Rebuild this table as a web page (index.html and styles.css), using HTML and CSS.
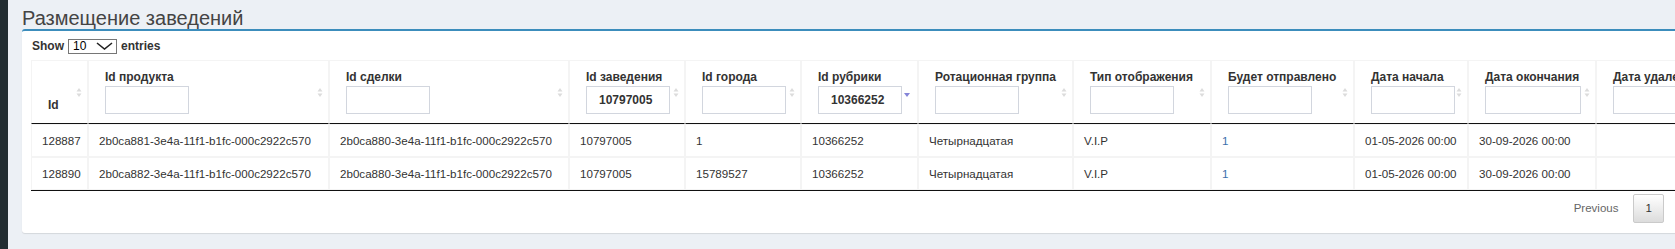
FILE: index.html
```html
<!DOCTYPE html>
<html lang="ru">
<head>
<meta charset="utf-8">
<title>Размещение заведений</title>
<link rel="stylesheet" href="styles.css">
</head>
<body>
<div class="layout">
  <aside class="sidebar"></aside>
  <main class="content">
    <h1 class="page-title">Размещение заведений</h1>
    <section class="box">
      <div class="dt-length">
        <label class="len-label">Show</label>
        <span class="select-wrap">
          <select class="len-select"><option>10</option><option>25</option><option>50</option><option>100</option></select>
          <svg class="chev" width="17" height="8" viewBox="0 0 17 8"><polyline points="1,1 8.5,7 16,1" fill="none" stroke="#222" stroke-width="1.6"/></svg>
        </span>
        <label class="len-label">entries</label>
      </div>
      <table class="dt">
        <thead>
          <tr>
            <th class="c-id"><div class="lbl">Id</div><svg class="sort-both" width="6" height="11" viewBox="0 0 6 11"><polygon points="0.5,4.5 3,1 5.5,4.5"/><polygon points="0.5,6.5 3,10 5.5,6.5"/></svg></th>
            <th class="c-uuid"><div class="lbl">Id продукта</div><input class="filter" type="text"><svg class="sort-both" width="6" height="11" viewBox="0 0 6 11"><polygon points="0.5,4.5 3,1 5.5,4.5"/><polygon points="0.5,6.5 3,10 5.5,6.5"/></svg></th>
            <th class="c-uuid2"><div class="lbl">Id сделки</div><input class="filter" type="text"><svg class="sort-both" width="6" height="11" viewBox="0 0 6 11"><polygon points="0.5,4.5 3,1 5.5,4.5"/><polygon points="0.5,6.5 3,10 5.5,6.5"/></svg></th>
            <th class="c-num"><div class="lbl">Id заведения</div><input class="filter" type="text" value="10797005"><svg class="sort-both" width="6" height="11" viewBox="0 0 6 11"><polygon points="0.5,4.5 3,1 5.5,4.5"/><polygon points="0.5,6.5 3,10 5.5,6.5"/></svg></th>
            <th class="c-num"><div class="lbl">Id города</div><input class="filter" type="text"><svg class="sort-both" width="6" height="11" viewBox="0 0 6 11"><polygon points="0.5,4.5 3,1 5.5,4.5"/><polygon points="0.5,6.5 3,10 5.5,6.5"/></svg></th>
            <th class="c-rub"><div class="lbl">Id рубрики</div><input class="filter" type="text" value="10366252"><svg class="sort-desc" width="6" height="4" viewBox="0 0 6 4"><polygon points="0,0 6,0 3,4"/></svg></th>
            <th class="c-rot"><div class="lbl">Ротационная группа</div><input class="filter" type="text"><svg class="sort-both" width="6" height="11" viewBox="0 0 6 11"><polygon points="0.5,4.5 3,1 5.5,4.5"/><polygon points="0.5,6.5 3,10 5.5,6.5"/></svg></th>
            <th class="c-type"><div class="lbl">Тип отображения</div><input class="filter" type="text"><svg class="sort-both" width="6" height="11" viewBox="0 0 6 11"><polygon points="0.5,4.5 3,1 5.5,4.5"/><polygon points="0.5,6.5 3,10 5.5,6.5"/></svg></th>
            <th class="c-send"><div class="lbl">Будет отправлено</div><input class="filter" type="text"><svg class="sort-both" width="6" height="11" viewBox="0 0 6 11"><polygon points="0.5,4.5 3,1 5.5,4.5"/><polygon points="0.5,6.5 3,10 5.5,6.5"/></svg></th>
            <th class="c-start"><div class="lbl">Дата начала</div><input class="filter" type="text"><svg class="sort-both" width="6" height="11" viewBox="0 0 6 11"><polygon points="0.5,4.5 3,1 5.5,4.5"/><polygon points="0.5,6.5 3,10 5.5,6.5"/></svg></th>
            <th class="c-end"><div class="lbl">Дата окончания</div><input class="filter filter-wide" type="text"><svg class="sort-both" width="6" height="11" viewBox="0 0 6 11"><polygon points="0.5,4.5 3,1 5.5,4.5"/><polygon points="0.5,6.5 3,10 5.5,6.5"/></svg></th>
            <th class="c-del"><div class="lbl">Дата удаления</div><input class="filter" type="text"><svg class="sort-both" width="6" height="11" viewBox="0 0 6 11"><polygon points="0.5,4.5 3,1 5.5,4.5"/><polygon points="0.5,6.5 3,10 5.5,6.5"/></svg></th>
          </tr>
        </thead>
        <tbody>
          <tr>
            <td>128887</td>
            <td>2b0ca881-3e4a-11f1-b1fc-000c2922c570</td>
            <td>2b0ca880-3e4a-11f1-b1fc-000c2922c570</td>
            <td>10797005</td>
            <td>1</td>
            <td>10366252</td>
            <td>Четырнадцатая</td>
            <td>V.I.P</td>
            <td><a class="cell-link" href="#">1</a></td>
            <td>01-05-2026 00:00</td>
            <td>30-09-2026 00:00</td>
            <td></td>
          </tr>
          <tr>
            <td>128890</td>
            <td>2b0ca882-3e4a-11f1-b1fc-000c2922c570</td>
            <td>2b0ca880-3e4a-11f1-b1fc-000c2922c570</td>
            <td>10797005</td>
            <td>15789527</td>
            <td>10366252</td>
            <td>Четырнадцатая</td>
            <td>V.I.P</td>
            <td><a class="cell-link" href="#">1</a></td>
            <td>01-05-2026 00:00</td>
            <td>30-09-2026 00:00</td>
            <td></td>
          </tr>
        </tbody>
      </table>
      <div class="dt-paginate">
        <span class="pg disabled">Previous</span>
        <span class="pg current">1</span>
        <span class="pg disabled">Next</span>
      </div>
    </section>
  </main>
</div>
</body>
</html>
```

FILE: styles.css
```css
* { box-sizing: border-box; }

html, body {
  margin: 0;
  height: 100%;
}

body {
  overflow: hidden;
  font-family: "Liberation Sans", Arial, sans-serif;
  color: #333;
  background: #ecf0f5;
}

.layout {
  display: flex;
  min-height: 100%;
}

.sidebar {
  flex: 0 0 8px;
  background: #222d32;
}

.content {
  flex: 1 0 auto;
  padding: 8px 0 0 14px;
  background: #ecf0f5;
}

.page-title {
  margin: 0;
  font-size: 20px;
  font-weight: normal;
  line-height: 21px;
  color: #444;
}

.box {
  width: 1703px;
  background: #fff;
  border-top: 2px solid #3c8dbc;
  border-radius: 3px;
  box-shadow: 0 1px 1px rgba(0, 0, 0, 0.1);
  padding: 8px 10px 10px 9px;
}

/* length selector */
.dt-length {
  display: flex;
  align-items: center;
  gap: 4px;
  height: 15px;
  padding-left: 1px;
}

.len-label {
  font-size: 12px;
  font-weight: bold;
  color: #333;
  line-height: 15px;
}

.select-wrap {
  position: relative;
  display: block;
  width: 49px;
  height: 15px;
}

.len-select {
  appearance: none;
  -webkit-appearance: none;
  display: block;
  width: 49px;
  height: 15px;
  margin: 0;
  padding: 0 0 0 4px;
  border: 1px solid #767676;
  border-radius: 0;
  background: #fff;
  font-family: inherit;
  font-size: 12px;
  line-height: 13px;
  color: #000;
}

.chev {
  position: absolute;
  left: 28px;
  top: 3px;
  pointer-events: none;
}

/* table */
.dt {
  margin-top: 6px;
  border-collapse: separate;
  border-spacing: 0;
  table-layout: fixed;
  width: 1695px;
  border-bottom: 1px solid #111;
}

.dt th,
.dt td {
  border: 1px solid #f4f4f4;
  white-space: nowrap;
  overflow: hidden;
}

.dt th {
  position: relative;
  vertical-align: bottom;
  text-align: left;
  padding: 8px 18px 9px 16px;
  font-size: 12px;
  font-weight: bold;
  color: #333;
  border-bottom: 1px solid #111;
}

.c-id { width: 57px; }
.c-uuid { width: 241px; }
.c-uuid2 { width: 240px; }
.c-num { width: 116px; }
.c-rub { width: 117px; }
.c-rot { width: 155px; }
.c-type { width: 138px; }
.c-send { width: 143px; }
.c-start { width: 114px; }
.c-end { width: 128px; }
.c-del { width: 130px; }

.lbl {
  line-height: 17px;
}

.filter {
  display: block;
  width: 84px;
  height: 28px;
  margin: 0;
  padding: 0 12px;
  border: 1px solid #d2d6de;
  border-radius: 0;
  background: #fff;
  font-family: inherit;
  font-size: 12px;
  font-weight: bold;
  color: #333;
}

.filter-wide { width: 96px; }

.sort-both {
  position: absolute;
  right: 5px;
  top: 50%;
  margin-top: -5px;
  fill: #dcdcdc;
}

.sort-desc {
  position: absolute;
  right: 7px;
  top: 50%;
  margin-top: 1px;
  fill: #8585d8;
}

.dt td {
  padding: 8px 10px;
  font-size: 11.6px;
  line-height: 15px;
  color: #333;
  background: #fff;
}

.cell-link {
  color: #3c6fab;
  text-decoration: none;
}

/* pagination */
.dt-paginate {
  display: flex;
  justify-content: flex-end;
  padding-top: 3px;
}

.pg {
  display: inline-block;
  margin-left: 2px;
  padding: 6px 11.5px;
  border: 1px solid transparent;
  border-radius: 2px;
  font-size: 11.5px;
  line-height: 15px;
  color: #333;
}

.pg.disabled {
  color: #666;
}

.pg.current {
  border-color: #cacaca;
  background: linear-gradient(to bottom, #fff 0%, #dcdcdc 100%);
  color: #333;
}
```
